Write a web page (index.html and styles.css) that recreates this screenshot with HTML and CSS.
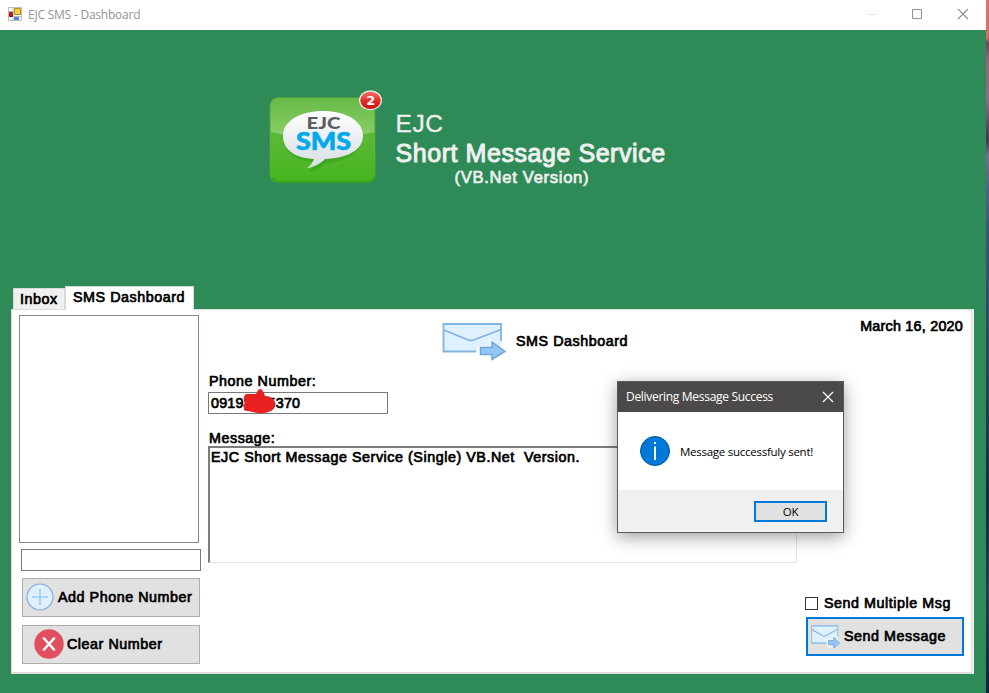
FILE: index.html
```
<!DOCTYPE html>
<html lang="en">
<head>
<meta charset="utf-8">
<title>EJC SMS - Dashboard</title>
<link rel="stylesheet" href="styles.css">
</head>
<body>
<svg class="defs" width="0" height="0" aria-hidden="true">
  <symbol id="envelope" viewBox="0 0 66 40" preserveAspectRatio="none">
    <path d="M1.500 3h57.500v27.500H1.500z" fill="#dff0ff"/>
    <path d="M34 30.500H1.500V3H59V20" fill="none" stroke="#83b3df" stroke-width="1.800"/>
    <path d="M2 9l23 9.500q4 2 8 0L59 8.500" fill="none" stroke="#83b3df" stroke-width="1.800"/>
    <path d="M35 24.500h12v-8l17 14-15 9-14-3z" fill="#fff" opacity=".6"/>
    <path d="M38.500 26.500h11.500v-5.500l13 9.500-13 8v-5h-11.500z" fill="#93c7fb" stroke="#6fa4d8" stroke-width="1.500"/>
  </symbol>
</svg>
<div class="window">
  <header class="titlebar">
    <svg class="app-icon" width="14" height="14" viewBox="0 0 14 14">
      <path d="M.5 .5h13v13H.5zM.5 4.500h5M.5 9.500h13M5 1v12" fill="#fff" stroke="#bdbdbd"/>
      <path d="M1.500 5.500h3v4h-3z" fill="#c9271c" stroke="#8d1813"/>
      <path d="M6.500 1.500h6v6h-6z" fill="#f8d143" stroke="#b88a16"/>
      <path d="M6 10h5v3H6z" fill="#4c84e8"/>
    </svg>
    <span class="title">EJC SMS - Dashboard</span>
    <svg class="controls" width="104" height="12" viewBox="0 0 104 12" fill="none">
      <path d="M0 6.500h10" stroke="#e4e4e4"/>
      <path d="M45.500 1.500h9v9h-9z" stroke="#909090"/>
      <path d="M91 1l10 10M101 1L91 11" stroke="#929292" stroke-width="1.200"/>
    </svg>
  </header>

  <section class="hero">
    <svg class="logo" width="114" height="94" viewBox="0 0 114 94">
      <defs>
        <linearGradient id="g1" x2="0" y2="1"><stop offset="0" stop-color="#68ba49"/><stop offset=".4" stop-color="#85cc62"/><stop offset="1" stop-color="#56b72f"/></linearGradient>
        <linearGradient id="g2" x2="0" y2="1"><stop offset="0" stop-color="#5db838"/><stop offset="1" stop-color="#45b51e"/></linearGradient>
        <linearGradient id="g3" x2="0" y2="1"><stop offset="0" stop-color="#fff"/><stop offset="1" stop-color="#d6dde3"/></linearGradient>
        <linearGradient id="g4" x2="0" y2="1"><stop offset="0" stop-color="#f7756f"/><stop offset=".5" stop-color="#e42e2d"/><stop offset="1" stop-color="#c90f13"/></linearGradient>
      </defs>
      <rect x="1" y="7.500" width="105" height="85" rx="8" fill="url(#g1)" stroke="#4e9f43"/>
      <path d="M1.500 42q52 12 104 0v43q0 7-8 7H9.500q-8 0-8-7z" fill="url(#g2)"/>
      <path d="M4 88q2 4 8 4h84q8 0 9-4" fill="none" stroke="#349d20" stroke-width="1.500"/>
      <path d="M54 21c23 0 40 10 40 25S79 71 57 73c-4 4-10 8-18 9 4-3 6-6 7-10C26 71 14 61 14 46s17-25 40-25z" fill="#2c9616" opacity=".45"/>
      <path d="M54 21c23 0 40 10 40 24.500S79 68 56 69c-4 4-10 8-18 9 4-3 6-6 7-9C26 68 14 60 14 45.500S31 21 54 21z" fill="url(#g3)"/>
      <text class="logo-ejc" x="37.500" y="39" textLength="34" lengthAdjust="spacingAndGlyphs">EJC</text>
      <text class="logo-sms" x="27" y="60" textLength="55" lengthAdjust="spacingAndGlyphs">SMS</text>
      <ellipse cx="101.500" cy="10.300" rx="11.500" ry="10" fill="#e9eee9"/>
      <ellipse cx="101.500" cy="10.300" rx="10.200" ry="8.700" fill="url(#g4)"/>
      <text class="logo-count" x="97.300" y="15">2</text>
    </svg>
    <div class="brand">
      <span class="brand-ejc">EJC</span>
      <span class="brand-name">Short Message Service</span>
      <span class="brand-version">(VB.Net Version)</span>
    </div>
  </section>

  <nav class="tabs">
    <span class="tab">Inbox</span>
    <span class="tab active">SMS Dashboard</span>
  </nav>

  <main class="panel">
    <aside class="numbers">
      <div class="list"></div>
      <div class="field"></div>
      <button class="btn add">
        <svg width="28" height="28" viewBox="0 0 28 28" fill="none"><circle cx="14" cy="14" r="13" fill="#e0f0ff" stroke="#7dabd9" stroke-width="1.200"/><path d="M14 6v16M6 14h16" stroke="#9ccbf8" stroke-width="1.500"/></svg>
        <span>Add Phone Number</span>
      </button>
      <button class="btn clear">
        <svg width="30" height="30" viewBox="0 0 30 30" fill="none"><circle cx="15" cy="15" r="14.700" fill="#e04f5f"/><path d="M10 9.500l10 11M20 9.500l-10 11" stroke="#fff" stroke-width="2.600" stroke-linecap="round"/></svg>
        <span>Clear Number</span>
      </button>
    </aside>

    <section class="compose">
      <div class="heading">
        <svg width="66" height="40"><use href="#envelope"/></svg>
        <span>SMS Dashboard</span>
      </div>
      <span class="label phone-label">Phone Number:</span>
      <div class="phone"><span>0919</span><span class="hidden-digits"></span><span>5370</span>
        <svg class="scribble" width="34" height="26" viewBox="0 0 34 26"><path d="M1 8q1-4 6-3l6 0 2-4q3-2 4 0l2 3 1 3q9 0 10 8 0 5-4 7-9 4-18 1l-5-1q-5 0-4-3-2-3 1-5-2-2-1-6z" fill="#e6211f"/></svg>
      </div>
      <span class="label message-label">Message:</span>
      <div class="message">EJC Short Message Service (Single) VB.Net&nbsp; Version.</div>
    </section>

    <aside class="actions">
      <span class="date">March 16, 2020</span>
      <label class="multiple"><span class="box"></span><span>Send Multiple Msg</span></label>
      <button class="btn send">
        <svg width="30" height="25"><use href="#envelope"/></svg>
        <span>Send Message</span>
      </button>
    </aside>
  </main>

  <div class="dialog" role="dialog">
    <div class="dialog-title">
      <span>Delivering Message Success</span>
      <svg width="12" height="12" viewBox="0 0 12 12"><path d="M1 1l10 10M11 1L1 11" stroke="#fff" stroke-width="1.200"/></svg>
    </div>
    <div class="dialog-body">
      <svg width="30" height="30" viewBox="0 0 30 30"><circle cx="15" cy="15" r="14.500" fill="#0078d7" stroke="#075495"/><path d="M14 10.500h2V24h-2zM14 6h2v2h-2z" fill="#fff"/></svg>
      <span>Message successfuly sent!</span>
    </div>
    <div class="dialog-footer"><button class="ok">OK</button></div>
  </div>
</div>
<div class="desktop"></div>
</body>
</html>
```
FILE: styles.css
```
* { box-sizing: border-box; }
body {
  margin: 0;
  width: 989px;
  height: 693px;
  display: flex;
  overflow: hidden;
  font: 14.3px/16px "Liberation Sans", Arial, sans-serif;
  letter-spacing: .55px;
  -webkit-text-stroke: .7px currentColor;
  color: #000;
  white-space: nowrap;
}
svg { display: block; flex: none; }
.defs { position: absolute; }
.window {
  position: relative;
  width: 986px;
  height: 693px;
  background: #2e8b57;
}
.desktop {
  width: 3px;
  background: linear-gradient(#d8766e 0, #d46c64 38px, #71435a 43px, #9a647b 60px, #8f6b86 100px, #46344d 140px, #776d91 155px, #555f8d 190px, #40527f 230px, #354a76 290px, #253757 420px, #192446 500px, #30365a 590px, #101f48 693px);
}
.titlebar {
  height: 30px;
  padding: 0 15px 2px 8px;
  display: flex;
  align-items: center;
  background: #fff;
}
.title {
  margin: 2px 0 0 6px;
  font: 12px/16px "Open Sans", "Noto Sans", sans-serif;
  letter-spacing: -.22px;
  -webkit-text-stroke: 0;
  color: #949494;
}
.controls { margin-left: auto; }
.hero {
  height: 256px;
  display: flex;
  padding: 60px 0 0 269px;
  color: #f0f0f0;
}
.logo { font-family: "Lato", sans-serif; letter-spacing: 0; -webkit-text-stroke: 0; }
.logo-ejc { font-size: 17px; font-weight: 900; fill: #5c5e63; }
.logo-sms { font-size: 25px; font-weight: 900; fill: #00a8ec; stroke: #00a8ec; stroke-width: .6px; }
.logo-count { font: bold 13px "DejaVu Sans", sans-serif; fill: #fff; }
.brand {
  margin: 19px 0 0 12.5px;
  display: flex;
  flex-direction: column;
}
.brand-ejc { font-size: 24.5px; line-height: 30px; letter-spacing: .6px; -webkit-text-stroke-width: .3px; }
.brand-name { font-size: 25px; line-height: 28px; letter-spacing: .56px; -webkit-text-stroke-width: 1px; }
.brand-version { padding-left: 59px; font-size: 16.6px; line-height: 21px; letter-spacing: .7px; }
.tabs {
  height: 23px;
  padding-left: 13px;
  display: flex;
  align-items: flex-end;
}
.tab {
  width: 52px;
  height: 21px;
  padding: 2px 0 0 6px;
  background: #f0f0f0;
  border: 1px solid #d9d9d9;
  border-bottom: 0;
}
.tab.active {
  width: 129px;
  height: 24px;
  margin-bottom: -1px;
  padding: 2px 0 0 7px;
  background: #fff;
  z-index: 1;
}
.panel {
  width: 963px;
  height: 365px;
  margin-left: 11px;
  padding: 5px 7px 0;
  display: flex;
  background: #fff;
  border: 1px solid #dcdcdc;
  border-right: 2px solid #f0f0f0;
  box-shadow: inset -1px -1px #dcdcdc;
}
.numbers { width: 182px; display: flex; flex-direction: column; }
.list { width: 180px; height: 228px; border: 1px solid #828790; }
.field { width: 180px; height: 22px; margin: 6px 0 7px 2px; border: 1px solid #7a7a7a; }
.btn {
  width: 178px;
  height: 39px;
  margin: 0 0 8px 3px;
  padding: 0 0 1px;
  display: flex;
  align-items: center;
  font: inherit;
  letter-spacing: inherit;
  color: #000;
  background: #e1e1e1;
  border: 1px solid #adadad;
}
.add { padding-left: 3px; gap: 4px; }
.clear { padding-left: 11px; gap: 3px; }
.compose {
  width: 589px;
  margin-left: 7px;
  display: flex;
  flex-direction: column;
}
.heading {
  height: 40px;
  margin: 6px 0 0 234px;
  display: flex;
  align-items: center;
  gap: 8px;
}
.label { padding-left: 1px; }
.phone-label { margin: 12px 0 3px; }
.phone {
  position: relative;
  width: 180px;
  height: 22px;
  padding: 2px;
  display: flex;
  border: 1px solid #7a7a7a;
  letter-spacing: .2px;
}
.hidden-digits { width: 24px; }
.scribble { position: absolute; left: 34px; top: -4px; }
.message-label { margin: 16px 0 0; }
.message {
  height: 117px;
  padding: 1px;
  border: 1px solid #e3e3e3;
  border-top: 2px solid #7c7c7c;
  border-left: 2px solid #7c7c7c;
}
.actions {
  width: 167px;
  display: flex;
  flex-direction: column;
}
.date { margin: 3px 1px 0 auto; letter-spacing: .25px; }
.multiple { margin: 261px 0 6px 8px; display: flex; align-items: center; gap: 6px; }
.box { width: 13px; height: 13px; border: 1px solid #333; background: #fff; }
.send {
  width: 158px;
  margin: 0 0 0 9px;
  padding-left: 3px;
  gap: 3px;
  border: 2px solid #0078d7;
}
.dialog {
  position: absolute;
  left: 617px;
  top: 381px;
  width: 227px;
  height: 152px;
  display: flex;
  flex-direction: column;
  background: #fff;
  border: 1px solid #5a5957;
  box-shadow: 0 4px 16px rgba(0, 0, 0, .38);
  font: 12px/16px "Open Sans", "Noto Sans", sans-serif;
  letter-spacing: -.3px;
  -webkit-text-stroke: 0;
}
.dialog-title {
  height: 30px;
  padding: 0 9px 1px 8px;
  display: flex;
  align-items: center;
  justify-content: space-between;
  color: #fff;
  background: #4c4a48;
}
.dialog-title span { padding-top: 1px; }
.dialog-body {
  height: 78px;
  padding-left: 22px;
  display: flex;
  align-items: center;
  gap: 10px;
  font-size: 11.5px;
  letter-spacing: -.26px;
}
.dialog-body span { padding-top: 1px; }
.dialog-footer { flex: 1; padding: 11px 16px 0; display: flex; justify-content: flex-end; background: #f0f0f0; }
.ok {
  width: 73px;
  height: 21px;
  padding: 0;
  font: 11.5px/16px "Open Sans", "Noto Sans", sans-serif;
  letter-spacing: -.3px;
  color: #000;
  background: #e1e1e1;
  border: 2px solid #0078d7;
}
```
